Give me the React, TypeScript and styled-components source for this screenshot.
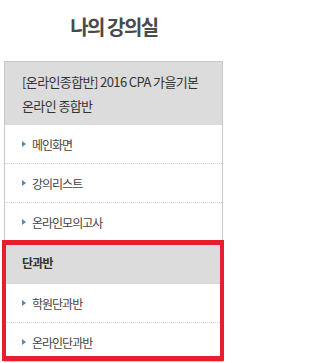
import styled, { createGlobalStyle } from "styled-components"

const GlobalStyle = createGlobalStyle`
  html, body {
    margin: 0;
    padding: 0;
    background: #ffffff;
  }
  body {
    font-family: "Noto Sans CJK KR", "Noto Sans", sans-serif;
    width: 228px;
  }
`

const Wrapper = styled.div`
  width: 228px;
  padding-bottom: 1px;
`

const Title = styled.h2`
  margin: 0 0 7px 0;
  height: 54px;
  line-height: 54px;
  text-align: center;
  font-size: 20px;
  font-weight: 700;
  letter-spacing: -1.5px;
  color: #4a4a4a;
`

const Panel = styled.div`
  margin-left: 4px;
  width: 217px;
  border: 1px solid #c9c9c9;
`

const CourseHeader = styled.div`
  background: #dcdcdc;
  padding: 8px 10px 7px 17px;
  font-size: 13px;
  line-height: 24px;
  letter-spacing: -0.6px;
  color: #333333;
`

const Section = styled.div`
  position: relative;

  &::after {
    content: "";
    position: absolute;
    top: -2px;
    left: -3px;
    right: -2px;
    bottom: 0;
    border: 4px solid #e3202b;
    border-top-width: 5px;
    border-bottom-width: 5px;
    pointer-events: none;
  }
`

const SectionHeader = styled.div`
  background: #dcdcdc;
  height: 41px;
  line-height: 41px;
  padding-left: 17px;
  font-size: 12px;
  font-weight: 700;
  letter-spacing: -0.8px;
  color: #333333;
  border-bottom: 1px dotted #cfcfcf;
`

const MenuList = styled.ul`
  list-style: none;
  margin: 0;
  padding: 0;
`

const MenuItem = styled.li<{ $last?: boolean }>`
  display: flex;
  align-items: center;
  gap: 6px;
  height: 38px;
  padding-left: 17px;
  font-size: 12px;
  letter-spacing: -1px;
  color: #444444;
  border-bottom: ${(p) => (p.$last ? "none" : "1px dotted #cfcfcf")};

  &::before {
    content: "";
    width: 0;
    height: 0;
    border-top: 3px solid transparent;
    border-bottom: 3px solid transparent;
    border-left: 4px solid #5b87a8;
  }
`

const App = () => {
  return (
    <>
      <GlobalStyle />
      <Wrapper>
        <Title>나의 강의실</Title>
        <Panel>
          <CourseHeader>
            [온라인종합반] 2016 CPA 가을기본
            <br />
            온라인 종합반
          </CourseHeader>
          <MenuList>
            <MenuItem>메인화면</MenuItem>
            <MenuItem>강의리스트</MenuItem>
            <MenuItem>온라인모의고사</MenuItem>
          </MenuList>
          <Section>
            <SectionHeader>단과반</SectionHeader>
            <MenuList>
              <MenuItem>학원단과반</MenuItem>
              <MenuItem $last>온라인단과반</MenuItem>
            </MenuList>
          </Section>
        </Panel>
      </Wrapper>
    </>
  )
}

export default App
